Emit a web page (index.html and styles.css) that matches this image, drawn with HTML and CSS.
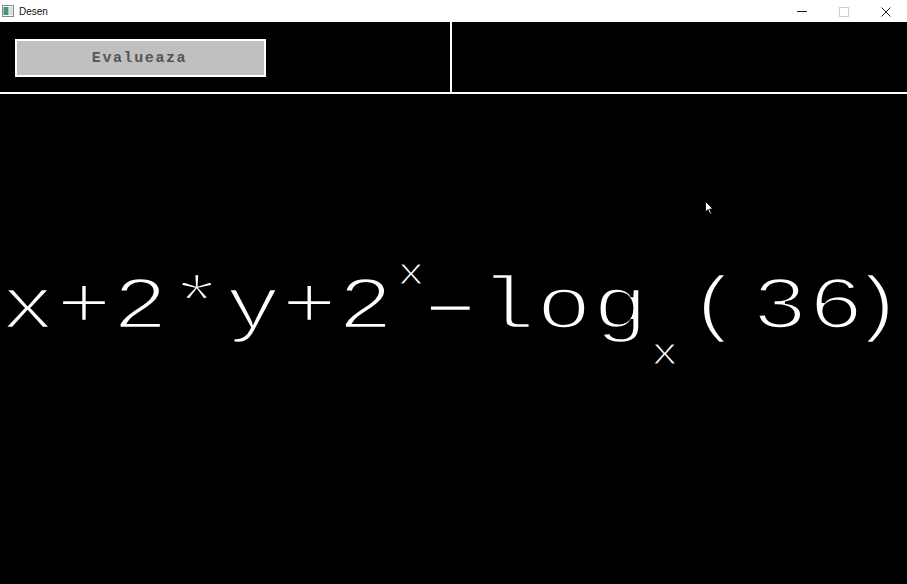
FILE: index.html
```html
<!DOCTYPE html>
<html>
<head>
<meta charset="utf-8">
<link rel="stylesheet" href="styles.css">
</head>
<body>
<div class="window">
  <div class="titlebar">
    <svg class="app-icon" width="12" height="12" viewBox="0 0 12 12">
      <rect x="0.5" y="0.5" width="11" height="11" fill="#fff" stroke="#8a8a8a"/>
      <rect x="1.5" y="2" width="5" height="8" fill="#3f9a6e"/>
      <rect x="7.5" y="2" width="3" height="8" fill="#d8d8d8"/>
    </svg>
    <span class="title">Desen</span>
    <div class="controls">
      <span class="ctl"><svg width="10" height="10" viewBox="0 0 10 10"><path d="M0 5.5H10" stroke="#222" stroke-width="1"/></svg></span>
      <span class="ctl"><svg width="10" height="10" viewBox="0 0 10 10"><rect x="0.5" y="0.5" width="9" height="9" fill="none" stroke="#cfcfcf"/></svg></span>
      <span class="ctl"><svg width="10" height="10" viewBox="0 0 10 10"><path d="M0.5 0.5L9.5 9.5M9.5 0.5L0.5 9.5" stroke="#222" stroke-width="1"/></svg></span>
    </div>
  </div>
  <div class="panel">
    <div class="panel-left">
      <button class="btn">Evalueaza</button>
    </div>
    <div class="panel-right"></div>
  </div>
  <div class="canvas">
    <div class="expr"><span>x+2*y+2</span><span class="sup">x</span><span class="minus">-</span><span class="log">log</span><span class="sub">x</span><span class="lpar">(</span><span class="num">3</span><span class="last">6</span><span class="rpar">)</span></div>
    <svg class="cursor" width="9" height="14" viewBox="0 0 9 14">
      <path d="M0.5 0.5V11L3 8.5L5 13L6.5 12.3L4.6 8H8Z" fill="#fff" stroke="#000" stroke-width="0.8"/>
    </svg>
  </div>
</div>
</body>
</html>
```

FILE: styles.css
```css
html, body {
  margin: 0;
  padding: 0;
  background: #000;
}
.window {
  width: 907px;
  height: 584px;
  overflow: hidden;
  display: flex;
  flex-direction: column;
  background: #000;
}
.titlebar {
  height: 22px;
  flex: none;
  background: #fff;
  display: flex;
  align-items: center;
  padding-left: 1px;
  box-sizing: border-box;
}
.app-icon {
  margin-left: 1px;
  flex: none;
}
.title {
  font-family: "Liberation Sans", Arial, sans-serif;
  font-size: 10px;
  color: #111;
  margin-left: 5px;
}
.controls {
  margin-left: auto;
  display: flex;
  height: 22px;
}
.ctl {
  width: 42px;
  display: flex;
  align-items: center;
  justify-content: center;
  padding-top: 1px;
}
.ctl:first-child { padding-top: 0; }
.panel {
  height: 70px;
  flex: none;
  display: flex;
  border-bottom: 2px solid #fff;
}
.panel-left {
  width: 452px;
  border-right: 2px solid #fff;
  flex: none;
  padding: 17px 0 0 15px;
  box-sizing: border-box;
}
.btn {
  width: 251px;
  height: 38px;
  box-sizing: border-box;
  background: #c0c0c0;
  border: 2px solid #fff;
  padding: 0 2px 0 0;
  margin: 0;
  font-family: "Liberation Mono", "Courier New", monospace;
  font-size: 15px;
  font-weight: bold;
  letter-spacing: 1.6px;
  color: #555;
  display: flex;
  align-items: center;
  justify-content: center;
}
.panel-right {
  flex: 1;
}
.canvas {
  flex: 1;
  position: relative;
}
.expr {
  margin-top: 159px;
  font-family: "Liberation Mono", "Courier New", monospace;
  font-size: 74px;
  letter-spacing: 0.64px;
  line-height: 100px;
  color: #fff;
  white-space: nowrap;
  -webkit-text-stroke: 2.6px #000;
  transform: scaleX(1.25);
  transform-origin: 0 50%;
}
.minus {
  display: inline-block;
  font-family: "Liberation Sans", Arial, sans-serif;
  letter-spacing: -4.6px;
  margin-left: 10.4px;
  transform: scaleX(2);
  transform-origin: 12.4px 50%;
}
.log {
  margin-left: 15.8px;
}
.sup, .sub {
  font-size: 36px;
  line-height: 1;
  letter-spacing: 0;
  -webkit-text-stroke: 1.2px #000;
}
.sup {
  vertical-align: 44px;
  margin-left: 2.7px;
  letter-spacing: -2px;
}
.sub {
  vertical-align: -36px;
  margin-left: 1.9px;
}
.lpar {
  margin-left: 7px;
}
.num {
  margin-left: 7px;
}
.last {
  letter-spacing: -12px;
}
.rpar {
  letter-spacing: 0;
  margin-left: 0.4px;
}
.cursor {
  position: absolute;
  left: 705px;
  top: 107px;
}
```
